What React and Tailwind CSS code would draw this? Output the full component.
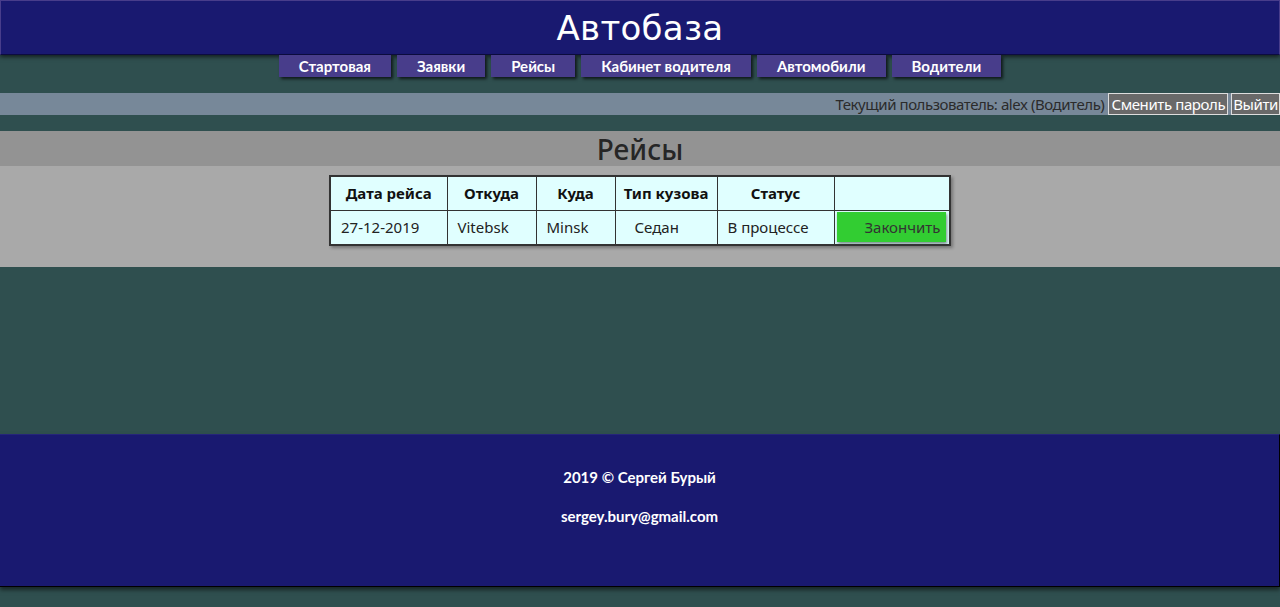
import React from "react";

export default function App() {
  const nav = ["Стартовая", "Заявки", "Рейсы", "Кабинет водителя", "Автомобили", "Водители"];
  const th = "border border-[#333] font-bold text-[15px] text-[#111] px-[8px] h-[34px] whitespace-nowrap";
  const td = "border border-[#333] text-[15px] text-[#222] px-[10px] h-[35px] text-left whitespace-nowrap";
  return (
    <div className="min-h-[607px] bg-[#2F4F4F] flex flex-col font-['Noto_Sans',sans-serif]">
      <header className="h-[55px] bg-[#191970] border border-[#483D8B] border-b-[#0c0c40] shadow-[0_2px_4px_rgba(0,0,0,0.6)] flex items-center justify-center">
        <h1 className="text-white text-[34px] leading-none font-['DejaVu_Sans',sans-serif] tracking-[0.3px]">Автобаза</h1>
      </header>
      <nav className="flex justify-center gap-[6px]">
        {nav.map((n) => (
          <div
            key={n}
            className="h-[22px] px-[20px] bg-[#483D8B] text-white text-[15px] font-bold flex items-center shadow-[2px_2px_3px_rgba(0,0,0,0.7)] font-['Lato',sans-serif]"
          >
            {n}
          </div>
        ))}
      </nav>
      <div className="mt-[16px] h-[22px] bg-[#778899] flex items-center justify-end">
        <span className="text-[15px] text-[#2b2b2b] mr-[4px] tracking-[-0.45px]">Текущий пользователь: alex (Водитель)</span>
        <span className="h-[22px] px-[2px] bg-[#696969] border border-[#ddd] text-white text-[15px] flex items-center tracking-[-0.4px]">Сменить пароль</span>
        <span className="ml-[3px] h-[22px] px-[1px] bg-[#696969] border border-[#ddd] text-white text-[15px] flex items-center tracking-[-0.4px]">Выйти</span>
      </div>
      <main className="mt-[16px] bg-[#A9A9A9] h-[136px] flex flex-col">
        <div className="h-[35px] bg-[#939393] flex items-center justify-center">
          <h2 className="text-[28px] font-medium text-[#262626] leading-none">Рейсы</h2>
        </div>
        <div className="flex justify-center mt-[9px]">
          <table className="table-fixed w-[622px] border-2 border-[#333] border-collapse bg-[#E0FFFF] shadow-[2px_2px_3px_rgba(0,0,0,0.3)]">
            <thead>
              <tr>
                <th className={th + " w-[117px]"}>Дата рейса</th>
                <th className={th + " w-[89px]"}>Откуда</th>
                <th className={th + " w-[79px]"}>Куда</th>
                <th className={th + " w-[102px]"}>Тип кузова</th>
                <th className={th + " w-[117px]"}>Статус</th>
                <th className={th}></th>
              </tr>
            </thead>
            <tbody>
              <tr>
                <td className={td}>27-12-2019</td>
                <td className={td}>Vitebsk</td>
                <td className={td}>Minsk</td>
                <td className={td + " pl-[19px]"}>Седан</td>
                <td className={td}>В процессе</td>
                <td className="border border-[#333] p-0 pl-[2px] align-bottom">
                  <div className="h-[30px] w-[109px] bg-[#32CD32] text-[15px] text-[#333] flex items-center justify-end pr-[5px] shadow-[1px_2px_3px_rgba(0,0,0,0.45)] mb-[2px]">
                    Закончить
                  </div>
                </td>
              </tr>
            </tbody>
          </table>
        </div>
      </main>
      <footer className="mt-[167px] h-[153px] bg-[#191970] border-t border-[#25257a] border-b border-r border-b-black border-r-black shadow-[0_3px_4px_rgba(0,0,0,0.5)] flex flex-col items-center text-white font-bold text-[15px] font-['Lato',sans-serif]">
        <div className="mt-[31px]">2019 © Сергей Бурый</div>
        <div className="mt-[16px]">sergey.bury@gmail.com</div>
      </footer>
    </div>
  );
}
